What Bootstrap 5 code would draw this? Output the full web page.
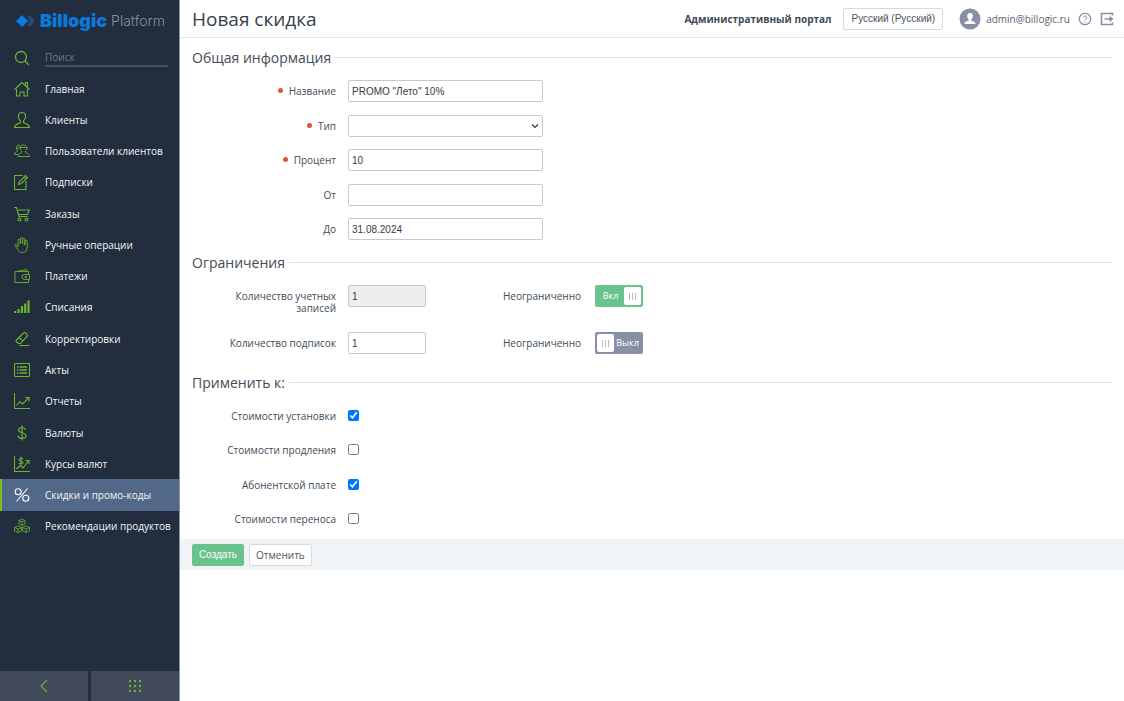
<!DOCTYPE html>
<html lang="ru">
<head>
<meta charset="utf-8">
<meta name="viewport" content="width=device-width, initial-scale=1">
<title>Новая скидка — Billogic Platform</title>
<link href="https://cdn.jsdelivr.net/npm/bootstrap@5.3.0/dist/css/bootstrap.min.css" rel="stylesheet">
<style>
  :root { --ui: "Open Sans", "Noto Sans", sans-serif; --form: "Liberation Sans", Arial, sans-serif; --green: #6cb52d; --ink: #414b57; }
  body { font-family: var(--ui); font-size: 10px; line-height: 12px; color: var(--ink); background: #fff; }

  /* Sidebar */
  .side { width: 180px; background: #222d3d; border-right: 1px solid #8e959f; }
  .brand-row { height: 42px; padding-left: 16px; font-family: Inter, sans-serif; line-height: 20px; text-decoration: none; }
  .brand-name { font-size: 18px; font-weight: 900; color: #0b78dc; margin-left: 5px; }
  .brand-kind { font-size: 14px; font-weight: 300; color: #8a919c; margin-left: 4px; }
  .side svg.ico { width: 16px; height: 16px; fill: none; stroke: var(--green); stroke-width: 1.1; flex: none; }
  .search-row { height: 31px; padding: 0 11px 0 14px; gap: 15px; }
  .search-row input { background: none; border: 0; border-bottom: 2px solid #465262; border-radius: 0; color: #fff; height: 18px; font-size: 10px; padding: 0; width: 100%; min-width: 0; outline: 0; }
  .search-row input::placeholder { color: #6f7987; }
  .menu { height: 469px; }
  .menu a { flex: 1 1 0; padding: 0 0 0 14px; gap: 15px; color: #f3f5f7; white-space: nowrap; text-decoration: none; }
  .menu a.active { background: #526889; box-shadow: inset 2px 0 #7cc01f; }
  .menu a.active .ico { stroke: #fff; }
  .side-foot { gap: 3px; }
  .side-foot button { height: 30px; border: 0; background: #404a5a; }

  /* Top bar */
  .topbar { height: 38px; border-bottom: 1px solid #e3e6e9; padding: 0 10px 0 12px; }
  .topbar h1 { font-size: 19px; line-height: 24px; color: #373f48; }
  .plain { font-family: var(--form); font-size: 10px; line-height: 12px; height: 22px; padding: 0 6px; border: 1px solid #d5dadf; border-radius: 2px; background: #fff; color: #4b535c; }
  .plain-ui { font-family: var(--ui); }
  .topbar .plain { padding: 0 7px; }
  .account { gap: 5px; color: #5a636e; text-decoration: none; }
  .topbar svg { display: block; }

  /* Form */
  .form-area { padding: 9px 12px 0; }
  .group-title { font-size: 14px; line-height: 21px; gap: 4px; color: #424b56; margin-bottom: 12px; font-weight: 400; }
  .group-title::after { content: ""; flex: 1; height: 1px; background: #dfe2e5; }
  .fields { height: 160px; margin-bottom: 12px; }
  .ticks { height: 124px; margin-bottom: 10px; }
  .line { gap: 12px; }
  .line > .caption { width: 144px; text-align: right; padding: 5px 0 0 12px; flex: none; }
  .req::before { content: ""; display: inline-block; width: 5px; height: 5px; border-radius: 50%; background: #e0543a; margin-right: 6px; vertical-align: 2px; }
  .box { font-family: var(--form); font-size: 10px; line-height: 14px; height: 22px; width: 195px; padding: 0 3px; border: 1px solid #c6cad0; border-radius: 2px; color: #343b43; background-color: #fff; }
  select.box { appearance: none; background: #fff url("data:image/svg+xml,%3Csvg xmlns='http://www.w3.org/2000/svg' viewBox='0 0 8 8'%3E%3Cpath d='M1 2.5 4 5.5 7 2.5' fill='none' stroke='%23333' stroke-width='1.1'/%3E%3C/svg%3E") no-repeat right 3px center / 8px 8px; }
  .box-short { width: 78px; }
  .box:disabled { background: #eee; }
  .limits { gap: 18px; margin-bottom: 18px; }
  .limit-more { gap: 14px; margin-left: 65px; }
  .limit-more > label:first-child { padding-top: 5px; }
  .tick { width: 11px; height: 11px; margin: 5px 0 0; accent-color: #0075ff; }
  .toggle { width: 48px; height: 22px; border-radius: 2px; background: #8790a5; color: #fff; padding: 2px; font-size: 9px; line-height: 12px; cursor: pointer; }
  .toggle .knob { width: 17px; height: 18px; border-radius: 2px; background: #fff; gap: 2px; }
  .knob i { width: 1px; height: 7px; background: #b9bbbd; }
  .toggle:has(:checked) { background: #68c38d; flex-direction: row-reverse; }
  .toggle .when-on, .toggle:has(:checked) .when-off { display: none; }
  .toggle:has(:checked) .when-on { display: inline; }
  .actions { background: #f1f4f7; height: 31px; padding: 0 12px; gap: 5px; }
  .create { background: #68c38d; border-color: #68c38d; color: #fff; }
</style>
</head>
<body>
<div class="d-flex min-vh-100">
  <aside class="side d-flex flex-column flex-shrink-0">
    <a href="#" class="brand-row d-flex align-items-center">
      <svg width="19" height="12" viewBox="0 0 19 12"><path d="M11 1h3q1 0 1.500.800L18.500 6l-3 4.200q-.5.800-1.500.800h-3l3-5z" fill="#2b4a70"/><path d="M6.500 0.500l5.500 5.500-5.500 5.500q-.5.400-1 0L0 6 5.500.500q.5-.4 1 0z" fill="#0b7be6"/></svg>
      <span class="brand-name">Billogic</span><span class="brand-kind">Platform</span>
    </a>
    <div class="search-row d-flex align-items-center">
      <svg class="ico" viewBox="0 0 16 16" style="stroke-width:1.300"><circle cx="7" cy="7" r="5.500"/><path d="M11 11l4 4"/></svg>
      <input type="search" placeholder="Поиск" aria-label="Поиск">
    </div>
    <nav class="menu d-flex flex-column">
      <a href="#" class="d-flex align-items-center"><svg class="ico" viewBox="0 0 16 16"><path d="M.5 8.500L8 1.500l7.500 7M11.500 4.500V1.500h2v5M2.500 8v7h3.500v-4h4v4h3.500V8"/></svg>Главная</a>
      <a href="#" class="d-flex align-items-center"><svg class="ico" viewBox="0 0 16 16"><path d="M8 .5c-2.500 0-3.800 1.800-3.500 4.200.2 2 .8 3.300 2 4.300v1.500C5 12 1 11.500.500 15.500h15C15 11.500 11 12 9.500 10.500V9c1.200-1 1.800-2.300 2-4.300C11.800 2.300 10.500.5 8 .5z"/></svg>Клиенты</a>
      <a href="#" class="d-flex align-items-center"><svg class="ico" viewBox="0 0 16 16" style="stroke-width:.9"><path d="M9 2c-2 0-3 1-2.800 3 .1 1.500.8 2.500 1.500 3v1.500c-1 1-3.200.5-3.700 4h11.500c-.5-3.500-3-3-4-4V8c.9-.5 1.500-1.500 1.500-3C13 3 11.500 2 9 2zM6.200 4.500h6.500M6 2.500C3.500 1.500 2 3 2.300 5c.1 1 .6 1.800 1.200 2.200v1C2.500 9 .8 8.500.500 11.500H4M2.300 5H6"/></svg>Пользователи клиентов</a>
      <a href="#" class="d-flex align-items-center"><svg class="ico" viewBox="0 0 16 16"><path d="M8.500 1.500H.5v14H12V7M4.500 10.500l1-3 6-6 2 2-6 6zM10 3l2 2"/></svg>Подписки</a>
      <a href="#" class="d-flex align-items-center"><svg class="ico" viewBox="0 0 16 16"><path d="M0 1.500h2.500l2.500 9h8.500M3.200 4h12l-1.700 4.500H4.500"/><circle cx="5.500" cy="13.500" r="1.500"/><circle cx="12.500" cy="13.500" r="1.500"/></svg>Заказы</a>
      <a href="#" class="d-flex align-items-center"><svg class="ico" viewBox="0 0 16 16" style="stroke-width:.9"><path d="M4 10V3.500a1 1 0 0 1 2.300 0V7V1.800a1 1 0 0 1 2.300 0V7V2.500a1 1 0 0 1 2.300 0V8V4.500a1 1 0 0 1 2.300 0V10c0 3.500-1.500 5.500-4.700 5.500-3 0-4-1.500-5-3.500L1 8.500c-.3-1.200 1-1.600 1.500-.8L4 10"/></svg>Ручные операции</a>
      <a href="#" class="d-flex align-items-center"><svg class="ico" viewBox="0 0 16 16" style="stroke-width:.9"><path d="M14.500 6.500v-3H1v11h13.500v-3M3 3.500L12.500 1.500l.5 2M15.500 6.500H10.500a2.500 2.500 0 0 0 0 5h5zM11 8.500h1.500v1H11z"/></svg>Платежи</a>
      <a href="#" class="d-flex align-items-center"><svg class="ico" viewBox="0 0 16 16" style="stroke-width:2.200"><path d="M1.200 14v-2M4.600 14v-4M8 14V7M11.200 14V4.500M14.500 14V1.500"/></svg>Списания</a>
      <a href="#" class="d-flex align-items-center"><svg class="ico" viewBox="0 0 16 16"><path d="M2.500 9L9.500 2q1-1 2 0l1.500 1.500q1 1 0 2L6.500 12.500h-2L2.500 11q-1-1 0-2zM5 6.500l4 3.700M5.500 14.500h10"/></svg>Корректировки</a>
      <a href="#" class="d-flex align-items-center"><svg class="ico" viewBox="0 0 16 16"><rect x=".5" y="1.500" width="15" height="13" rx="1"/><path d="M3 5h1.500M3 8h1.500M3 11h1.500M5.500 5H13M5.500 8H13M5.500 11H13" stroke-width="1.600"/></svg>Акты</a>
      <a href="#" class="d-flex align-items-center"><svg class="ico" viewBox="0 0 16 16"><path d="M.5 0v15.500H16M2.500 12.500l3.500-4 2.500 2.500L14.500 5M11 4.500h4v4"/></svg>Отчеты</a>
      <a href="#" class="d-flex align-items-center"><svg class="ico" viewBox="0 0 16 16" style="stroke-width:1.200"><path d="M11.500 5c0-1.500-1.500-2.500-3.500-2.500S4.500 3.500 4.500 5c0 3.500 7.500 2 7.500 5.500 0 1.700-1.700 2.800-4 2.800s-4-1.100-4-2.800M8 .5v15"/></svg>Валюты</a>
      <a href="#" class="d-flex align-items-center"><svg class="ico" viewBox="0 0 16 16"><path d="M.5 0v15.500H16M2.500 13l4-3.500L9 12l5.500-7M11.500 4.500h3.500V8M9 3c-1-1-4-.8-4 .8 0 1.800 4 1 4 2.700S5.500 8 4.800 7M7 .5v9"/></svg>Курсы валют</a>
      <a href="#" class="d-flex align-items-center active" aria-current="page"><svg class="ico" viewBox="0 0 16 16"><circle cx="4.200" cy="4.800" r="3"/><circle cx="11.800" cy="11.200" r="3"/><path d="M13.500 1.500L2.500 14.500"/></svg>Скидки и промо-коды</a>
      <a href="#" class="d-flex align-items-center"><svg class="ico" viewBox="0 0 16 16" style="stroke-width:.8"><path d="M8 1l3 1.500v3.500L8 7.500 5 6V2.500zM5 2.500L8 4l3-1.500M8 4v3.500"/><path d="M4 8l3.500 1.500V13L4 14.500.5 13V9.500zM.5 9.500L4 11l3.500-1.500M4 11v3.500M12 8l3.500 1.500V13L12 14.500 8.500 13V9.500zM8.500 9.500L12 11l3.500-1.500M12 11v3.500"/></svg>Рекомендации продуктов</a>
    </nav>
    <div class="side-foot d-flex mt-auto">
      <button type="button" class="flex-fill w-50 d-flex align-items-center justify-content-center p-0" aria-label="Свернуть меню"><svg class="ico" viewBox="0 0 16 16"><path d="M11 2L5 8l6 6"/></svg></button>
      <button type="button" class="flex-fill w-50 d-flex align-items-center justify-content-center p-0" aria-label="Приложения"><svg class="ico" viewBox="0 0 16 16" style="stroke-width:2.400;stroke-linecap:round"><path d="M3 3h0M8 3h0M13 3h0M3 8h0M8 8h0M13 8h0M3 13h0M8 13h0M13 13h0"/></svg></button>
    </div>
  </aside>

  <main class="flex-grow-1">
    <header class="topbar d-flex align-items-center">
      <h1 class="fw-normal mb-0 me-auto">Новая скидка</h1>
      <strong class="me-2 pe-1">Административный портал</strong>
      <button type="button" class="plain me-3">Русский (Русский)</button>
      <a href="#" class="account d-flex align-items-center">
        <svg width="22" height="22" viewBox="0 0 22 22"><circle cx="11" cy="11" r="10.500" fill="#8790a5"/><path d="M11 5c-2 0-3 1.300-2.800 3.200.1 1.500.7 2.600 1.500 3.300v1c-1 1-4 .5-4.200 3.500h11c-.2-3-3.200-2.500-4.200-3.500v-1c.8-.7 1.400-1.800 1.500-3.300C14 6.300 13 5 11 5z" fill="#fff"/></svg>
        <span>admin@billogic.ru</span>
      </a>
      <a href="#" class="ms-2" aria-label="Справка"><svg width="14" height="14" viewBox="0 0 14 14" fill="none" stroke="#8790a5"><circle cx="7" cy="7" r="5.700" stroke-width="1.200"/><path d="M5.300 5.700c0-2.200 3.400-2.200 3.400 0C8.700 7 7 7 7 8.300M7 9.300v1.200"/></svg></a>
      <a href="#" class="ms-2" aria-label="Выйти"><svg width="14" height="14" viewBox="0 0 14 14" fill="none" stroke="#8790a5" stroke-width="1.600"><path d="M12.500 3.500V1.500h-11v11h11v-2M4.500 7H12"/><path d="M9.500 3.800L13.500 7l-4 3.200z" fill="#8790a5" stroke="none"/></svg></a>
    </header>

    <form>
      <div class="form-area">
        <h2 class="group-title d-flex align-items-center">Общая информация</h2>
        <div class="fields d-flex flex-column justify-content-between">
          <div class="line d-flex"><label class="caption req" for="name">Название</label><input class="box" id="name" type="text" value='PROMO "Лето" 10%' required></div>
          <div class="line d-flex"><label class="caption req" for="kind">Тип</label><select class="box" id="kind" required><option></option></select></div>
          <div class="line d-flex"><label class="caption req" for="percent">Процент</label><input class="box" id="percent" type="text" value="10" required></div>
          <div class="line d-flex"><label class="caption" for="from">От</label><input class="box" id="from" type="text"></div>
          <div class="line d-flex"><label class="caption" for="to">До</label><input class="box" id="to" type="text" value="31.08.2024"></div>
        </div>

        <h2 class="group-title d-flex align-items-center">Ограничения</h2>
        <div class="limits d-flex flex-column">
          <div class="line d-flex align-items-start">
            <label class="caption" for="accounts">Количество учетных записей</label>
            <input class="box box-short" id="accounts" type="text" value="1" disabled>
            <div class="limit-more d-flex"><label for="accounts-any">Неограниченно</label>
              <label class="toggle d-flex align-items-center"><input class="visually-hidden" id="accounts-any" type="checkbox" role="switch" checked><span class="knob d-flex align-items-center justify-content-center"><i></i><i></i><i></i></span><span class="flex-fill text-center"><span class="when-on">Вкл</span><span class="when-off">Выкл</span></span></label></div>
          </div>
          <div class="line d-flex align-items-start">
            <label class="caption" for="subs">Количество подписок</label>
            <input class="box box-short" id="subs" type="text" value="1">
            <div class="limit-more d-flex"><label for="subs-any">Неограниченно</label>
              <label class="toggle d-flex align-items-center"><input class="visually-hidden" id="subs-any" type="checkbox" role="switch"><span class="knob d-flex align-items-center justify-content-center"><i></i><i></i><i></i></span><span class="flex-fill text-center"><span class="when-on">Вкл</span><span class="when-off">Выкл</span></span></label></div>
          </div>
        </div>

        <h2 class="group-title d-flex align-items-center">Применить к:</h2>
        <div class="ticks d-flex flex-column justify-content-between">
          <div class="line d-flex"><label class="caption pb-1" for="setup">Стоимости установки</label><input class="tick" id="setup" type="checkbox" checked></div>
          <div class="line d-flex"><label class="caption pb-1" for="renew">Стоимости продления</label><input class="tick" id="renew" type="checkbox"></div>
          <div class="line d-flex"><label class="caption pb-1" for="fee">Абонентской плате</label><input class="tick" id="fee" type="checkbox" checked></div>
          <div class="line d-flex"><label class="caption pb-1" for="transfer">Стоимости переноса</label><input class="tick" id="transfer" type="checkbox"></div>
        </div>
      </div>
      <div class="actions d-flex align-items-center">
        <button type="submit" class="plain create">Создать</button>
        <button type="button" class="plain plain-ui">Отменить</button>
      </div>
    </form>
  </main>
</div>
<script src="https://cdn.jsdelivr.net/npm/bootstrap@5.3.0/dist/js/bootstrap.bundle.min.js"></script>
</body>
</html>
